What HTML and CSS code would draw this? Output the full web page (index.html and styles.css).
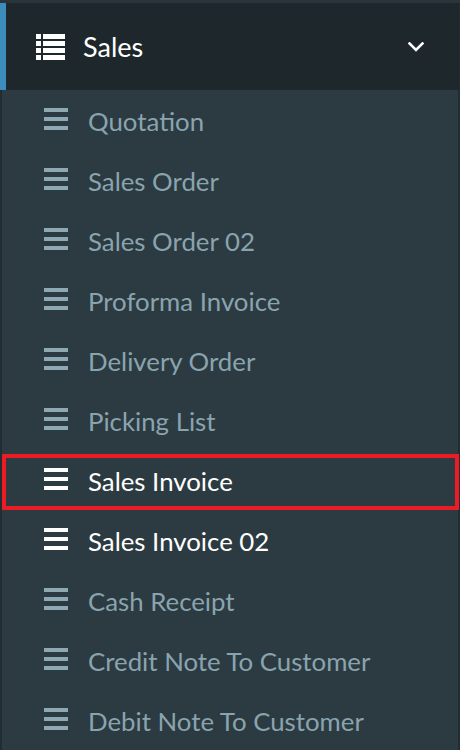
FILE: index.html
```html
<!DOCTYPE html>
<html>
<head>
<meta charset="utf-8">
<link rel="stylesheet" href="styles.css">
</head>
<body>
<div class="sidebar">
  <div class="top-strip"></div>
  <div class="menu-header">
    <svg class="list-icon" width="29" height="26" viewBox="0 0 29 26">
      <rect x="0" y="0" width="5" height="5" fill="#fff"/>
      <rect x="7" y="0" width="22" height="5" fill="#fff"/>
      <rect x="0" y="7" width="5" height="5" fill="#fff"/>
      <rect x="7" y="7" width="22" height="5" fill="#fff"/>
      <rect x="0" y="14" width="5" height="5" fill="#fff"/>
      <rect x="7" y="14" width="22" height="5" fill="#fff"/>
      <rect x="0" y="21" width="5" height="5" fill="#fff"/>
      <rect x="7" y="21" width="22" height="5" fill="#fff"/>
    </svg>
    <span class="header-label">Sales</span>
    <svg class="chevron" width="16" height="10" viewBox="0 0 16 10">
      <path d="M1.5 1.5 L8 8 L14.5 1.5" fill="none" stroke="#fff" stroke-width="2.6" stroke-linecap="square"/>
    </svg>
  </div>
  <ul class="submenu">
    <li class="item"><svg class="bars" width="24" height="24" viewBox="0 0 24 24"><rect y="1" width="24" height="4"/><rect y="10" width="24" height="4"/><rect y="19" width="24" height="4"/></svg><span>Quotation</span></li>
    <li class="item"><svg class="bars" width="24" height="24" viewBox="0 0 24 24"><rect y="1" width="24" height="4"/><rect y="10" width="24" height="4"/><rect y="19" width="24" height="4"/></svg><span>Sales Order</span></li>
    <li class="item"><svg class="bars" width="24" height="24" viewBox="0 0 24 24"><rect y="1" width="24" height="4"/><rect y="10" width="24" height="4"/><rect y="19" width="24" height="4"/></svg><span>Sales Order 02</span></li>
    <li class="item"><svg class="bars" width="24" height="24" viewBox="0 0 24 24"><rect y="1" width="24" height="4"/><rect y="10" width="24" height="4"/><rect y="19" width="24" height="4"/></svg><span>Proforma Invoice</span></li>
    <li class="item"><svg class="bars" width="24" height="24" viewBox="0 0 24 24"><rect y="1" width="24" height="4"/><rect y="10" width="24" height="4"/><rect y="19" width="24" height="4"/></svg><span>Delivery Order</span></li>
    <li class="item"><svg class="bars" width="24" height="24" viewBox="0 0 24 24"><rect y="1" width="24" height="4"/><rect y="10" width="24" height="4"/><rect y="19" width="24" height="4"/></svg><span>Picking List</span></li>
    <li class="item active highlighted"><svg class="bars" width="24" height="24" viewBox="0 0 24 24"><rect y="1" width="24" height="4"/><rect y="10" width="24" height="4"/><rect y="19" width="24" height="4"/></svg><span>Sales Invoice</span></li>
    <li class="item active"><svg class="bars" width="24" height="24" viewBox="0 0 24 24"><rect y="1" width="24" height="4"/><rect y="10" width="24" height="4"/><rect y="19" width="24" height="4"/></svg><span>Sales Invoice 02</span></li>
    <li class="item"><svg class="bars" width="24" height="24" viewBox="0 0 24 24"><rect y="1" width="24" height="4"/><rect y="10" width="24" height="4"/><rect y="19" width="24" height="4"/></svg><span>Cash Receipt</span></li>
    <li class="item"><svg class="bars" width="24" height="24" viewBox="0 0 24 24"><rect y="1" width="24" height="4"/><rect y="10" width="24" height="4"/><rect y="19" width="24" height="4"/></svg><span>Credit Note To Customer</span></li>
    <li class="item"><svg class="bars" width="24" height="24" viewBox="0 0 24 24"><rect y="1" width="24" height="4"/><rect y="10" width="24" height="4"/><rect y="19" width="24" height="4"/></svg><span>Debit Note To Customer</span></li>
  </ul>
</div>
</body>
</html>
```
FILE: styles.css
```css
html, body {
  margin: 0;
  padding: 0;
  background: #222d32;
  height: 100%;
  overflow: hidden;
}
.sidebar {
  width: 460px;
  font-family: "Lato", "Open Sans", sans-serif;
}
.top-strip {
  height: 3px;
  background: #29353b;
}
.menu-header {
  height: 87px;
  margin-right: 1px;
  background: #1e282c;
  border-left: 6px solid #3c8dbc;
  display: flex;
  align-items: center;
  padding-left: 30px;
  padding-right: 35px;
  color: #fff;
}
.list-icon {
  flex: none;
  margin-right: 18px;
}
.header-label {
  flex: 1;
  font-size: 27px;
  line-height: 40px;
}
.chevron {
  flex: none;
}
.submenu {
  list-style: none;
  margin: 0 2px;
  padding: 2px 0 0 0;
  background: #2c3b41;
}
.item {
  position: relative;
  height: 60px;
  display: flex;
  align-items: center;
  padding-left: 42px;
  color: #8aa4af;
  font-size: 25.8px;
}
.item span {
  position: relative;
  top: -1px;
}
.item .bars {
  flex: none;
  fill: #8fa9b4;
  margin-right: 20px;
  position: relative;
  top: -3px;
}
.item.active {
  color: #fff;
}
.item.active .bars {
  fill: #fff;
}
.item.highlighted::after {
  content: "";
  position: absolute;
  left: 0;
  right: -1px;
  top: 2px;
  bottom: 2px;
  border: 4px solid #ed1c24;
}
```
